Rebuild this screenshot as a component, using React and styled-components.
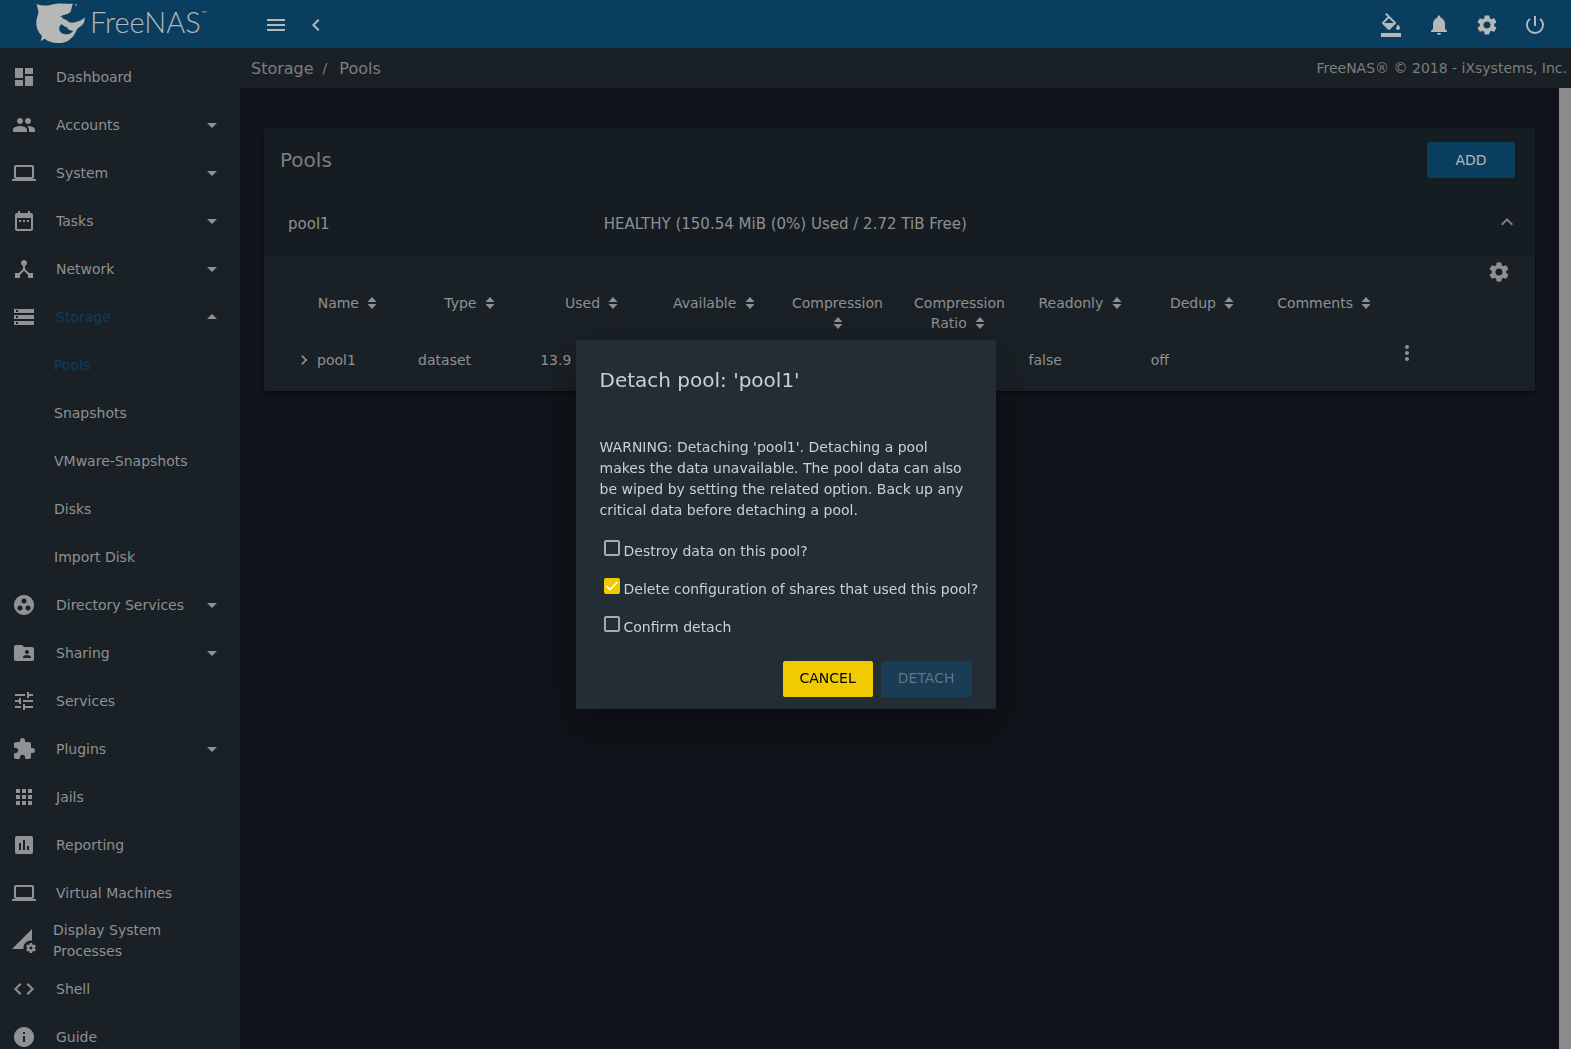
import React from 'react';
import styled, { createGlobalStyle } from 'styled-components';
import {
  MdDashboard, MdPeople, MdLaptop, MdDateRange, MdDeviceHub, MdStorage, MdGroupWork,
  MdFolderShared, MdTune, MdExtension, MdApps, MdAssessment, MdPermDataSetting, MdCode,
  MdInfo, MdArrowDropDown, MdArrowDropUp, MdMenu, MdChevronLeft, MdChevronRight,
  MdFormatColorFill, MdNotifications, MdSettings, MdPowerSettingsNew, MdMoreVert, MdExpandLess,
} from 'react-icons/md';

const color = {
  primary: '#093e60',
  surface: '#1a2126',
  header: '#161d22',
  page: '#10141a',
  dialog: '#232d35',
  accent: '#f0cb00',
  text: '#8f9091',
  textDim: '#7c7e7f',
  onPrimary: '#b6b7b7',
};

const GlobalStyle = createGlobalStyle`
  * { box-sizing: border-box; }
  body {
    margin: 0;
    background: ${color.page};
    color: ${color.text};
    font: 14px/21px "DejaVu Sans", sans-serif;
  }
  button { font: inherit; color: inherit; border: 0; padding: 0; background: none; cursor: pointer; }
  a { color: inherit; text-decoration: none; }
  svg { display: block; flex: none; }
`;

const Shell = styled.div`
  display: grid;
  grid-template: 48px minmax(0, 1fr) / 240px minmax(0, 1fr);
  height: 100vh;
  overflow: hidden;
`;

const Brand = styled.a`
  display: flex;
  align-items: center;
  gap: 5px;
  padding-left: 36px;
  background: ${color.primary};
  color: ${color.onPrimary};
`;

const BrandName = styled.span`
  display: flex;
  padding-bottom: 4px;
  font: 300 29px/40px Lato, sans-serif;
`;

const Trademark = styled.sup`
  font: 7px/24px "DejaVu Sans", sans-serif;
`;

const TopBar = styled.header`
  display: flex;
  align-items: center;
  justify-content: space-between;
  padding: 2px 24px 0;
  background: ${color.primary};
  color: ${color.onPrimary};
`;

const ButtonGroup = styled.div`
  display: flex;
  gap: ${(p) => p.$gap}px;
`;

const IconButton = styled.button`
  display: block;
`;

const Sidebar = styled.nav`
  padding-top: 5px;
  overflow: hidden;
  background: ${color.surface};
`;

const NavList = styled.ul`
  margin: 0;
  padding: 0;
  list-style: none;
`;

const NavLink = styled.a`
  display: flex;
  align-items: center;
  height: 48px;
  padding: 0 16px 0 ${(p) => (p.$sub ? 54 : 12)}px;
  gap: ${(p) => (p.$wrap ? 17 : 20)}px;
  color: ${(p) => (p.$active ? '#0b3d60' : color.text)};
  white-space: ${(p) => (p.$wrap ? 'normal' : 'nowrap')};
  svg { color: #919293; }
`;

const NavLabel = styled.span`
  flex: 1;
  min-width: 0;
`;

const Main = styled.main`
  display: flex;
  flex-direction: column;
  min-width: 0;
`;

const SubBar = styled.div`
  display: flex;
  align-items: center;
  justify-content: space-between;
  flex: none;
  height: 40px;
  padding: 0 4px 0 11px;
  background: ${color.surface};
  color: ${color.textDim};
`;

const Crumbs = styled.nav`
  display: flex;
  gap: 12px;
  font-size: 16px;
`;

const Slash = styled.span`
  margin-left: -3px;
  font-size: 14px;
`;

const Scroller = styled.div`
  display: grid;
  grid-template-columns: minmax(0, 1fr) 12px;
  flex: 1;
`;

const ScrollThumb = styled.div`
  background: #8a8b8a;
`;

const Content = styled.div`
  padding: 40px 24px;
`;

const Card = styled.section`
  border-radius: 2px;
  background: ${color.surface};
  box-shadow: 0 3px 1px -2px rgba(0, 0, 0, 0.2), 0 2px 2px rgba(0, 0, 0, 0.14), 0 1px 5px rgba(0, 0, 0, 0.2);
`;

const CardHeader = styled.div`
  display: flex;
  align-items: center;
  justify-content: space-between;
  height: 64px;
  padding: 0 20px 0 16px;
  border-radius: 2px 2px 0 0;
  background: ${color.header};
`;

const CardTitle = styled.h1`
  margin: 0;
  color: ${color.textDim};
  font-size: 20px;
  font-weight: 400;
`;

const Button = styled.button`
  height: 36px;
  padding: 0 16px;
  border-radius: 2px;
  background: ${color.primary};
  color: ${color.onPrimary};
`;

const AddButton = styled(Button)`
  width: 88px;
`;

const PoolHeader = styled.button`
  display: grid;
  grid-template-columns: 1fr 2fr 1fr;
  align-items: center;
  column-gap: 16px;
  width: 100%;
  height: 64px;
  padding: 0 16px 0 24px;
  background: ${color.header};
  font-size: 15px;
  text-align: left;
  svg { justify-self: end; margin-bottom: 4px; color: #7f8182; }
`;

const PoolTools = styled.div`
  display: flex;
  justify-content: flex-end;
  align-items: flex-start;
  height: 32px;
  padding: 2px 24px 0;
  svg { margin-top: 2px; }
`;

const TableWrap = styled.div`
  padding: 0 26px 7px 24px;
`;

const Table = styled.table`
  width: 100%;
  table-layout: fixed;
  border-collapse: collapse;
`;

const HeadCell = styled.th`
  height: 48px;
  padding: 5px 8px 3px;
  font-weight: 400;
  line-height: 20px;
  text-align: center;
  vertical-align: top;
`;

const SortMark = styled.svg`
  display: inline-block;
  margin: 0 3px 0 4px;
  vertical-align: -1px;
`;

const Cell = styled.td`
  height: 48px;
  padding: 0 8px;
  white-space: nowrap;
`;

const RowName = styled.span`
  display: flex;
  align-items: center;
  gap: 3px;
  margin-left: -2px;
`;

const RowMenu = styled(IconButton)`
  margin-bottom: 14px;
`;

const Backdrop = styled.div`
  position: fixed;
  inset: 0;
  display: grid;
  place-items: center;
`;

const Dialog = styled.form`
  width: 420px;
  padding: 24px 24px 12px;
  border-radius: 2px;
  background: ${color.dialog};
  color: #cdcfd0;
  box-shadow: 0 11px 15px -7px rgba(0, 0, 0, 0.2), 0 24px 38px 3px rgba(0, 0, 0, 0.14), 0 9px 46px 8px rgba(0, 0, 0, 0.12);
`;

const DialogTitle = styled.h2`
  margin: 0 0 41px;
  font-size: 20px;
  font-weight: 400;
  line-height: 32px;
`;

const Warning = styled.p`
  margin: 0 0 11px;
`;

const Option = styled.label`
  display: flex;
  align-items: center;
  gap: 4px;
  height: 38px;
  padding-left: 4px;
  white-space: nowrap;
`;

const CheckSlot = styled.span`
  display: grid;
  margin-bottom: 6px;
  > * { grid-area: 1 / 1; }
  svg { pointer-events: none; }
`;

const CheckInput = styled.input`
  appearance: none;
  width: 16px;
  height: 16px;
  margin: 0;
  border: 2px solid #a7abae;
  border-radius: 2px;
  &:checked { border-color: ${color.accent}; background: ${color.accent}; }
  &:not(:checked) + svg { visibility: hidden; }
`;

const DialogActions = styled.div`
  display: flex;
  justify-content: flex-end;
  gap: 8px;
  padding-top: 15px;
`;

const DialogButton = styled(Button)`
  padding: 0 17px 2px;
  background: ${(p) => (p.$accent ? color.accent : '#1a3c54')};
  color: ${(p) => (p.$accent ? '#000' : '#67737d')};
`;

const navItems = [
  { label: 'Dashboard', icon: MdDashboard },
  { label: 'Accounts', icon: MdPeople, arrow: MdArrowDropDown },
  { label: 'System', icon: MdLaptop, arrow: MdArrowDropDown },
  { label: 'Tasks', icon: MdDateRange, arrow: MdArrowDropDown },
  { label: 'Network', icon: MdDeviceHub, arrow: MdArrowDropDown },
  { label: 'Storage', icon: MdStorage, arrow: MdArrowDropUp, active: true },
  { label: 'Pools', active: true },
  { label: 'Snapshots' },
  { label: 'VMware-Snapshots' },
  { label: 'Disks' },
  { label: 'Import Disk' },
  { label: 'Directory Services', icon: MdGroupWork, arrow: MdArrowDropDown },
  { label: 'Sharing', icon: MdFolderShared, arrow: MdArrowDropDown },
  { label: 'Services', icon: MdTune },
  { label: 'Plugins', icon: MdExtension, arrow: MdArrowDropDown },
  { label: 'Jails', icon: MdApps },
  { label: 'Reporting', icon: MdAssessment },
  { label: 'Virtual Machines', icon: MdLaptop },
  { label: 'Display System Processes', icon: MdPermDataSetting, wrap: true },
  { label: 'Shell', icon: MdCode },
  { label: 'Guide', icon: MdInfo },
];

const columns = ['Name', 'Type', 'Used', 'Available', 'Compression', 'Compression Ratio', 'Readonly', 'Dedup', 'Comments'];

const options = [
  { id: 'destroy', label: 'Destroy data on this pool?' },
  { id: 'cascade', label: 'Delete configuration of shares that used this pool?', checked: true },
  { id: 'confirm', label: 'Confirm detach' },
];

function SharkLogo() {
  return (
    <svg width="49" height="42" viewBox="12 9 147 126" fill="currentColor" aria-hidden="true">
      <path d="M14 12C30 18 45 18 58 14C75 8 100 11 123 11C117 22 120 32 112 39C104 44 92 44 84 50C90 50 94 52 92 56C100 58 106 60 110 66C116 69 126 68 132 66C142 64 152 60 158 52C160 66 152 76 142 82C136 84 134 92 128 102C116 122 98 130 80 129C62 130 48 124 38 116L26 124L30 108C16 96 10 76 14 58C16 46 22 38 18 30Z" />
      <path fill={color.primary} d="M90 73C80 76 80 90 86 97C96 107 116 104 124 92C114 92 106 88 104 81C98 81 94 78 90 73Z" />
      <circle cx="132" cy="15" r="4" opacity="0.500" />
    </svg>
  );
}

function Sort() {
  return (
    <SortMark width="10" height="12" viewBox="0 0 10 12" fill="currentColor" aria-hidden="true">
      <path d="M0.500 5L5 0L9.500 5ZM0.500 7L5 12L9.500 7Z" />
    </SortMark>
  );
}

export default function App() {
  return (
    <>
      <GlobalStyle />
      <Shell>
        <Brand href="#">
          <SharkLogo />
          <BrandName>FreeNAS<Trademark>™</Trademark></BrandName>
        </Brand>
        <TopBar>
          <ButtonGroup $gap={16}>
            <IconButton aria-label="Toggle menu"><MdMenu size={24} /></IconButton>
            <IconButton aria-label="Collapse menu"><MdChevronLeft size={24} /></IconButton>
          </ButtonGroup>
          <ButtonGroup $gap={24}>
            <IconButton aria-label="Theme"><MdFormatColorFill size={24} /></IconButton>
            <IconButton aria-label="Notifications"><MdNotifications size={24} /></IconButton>
            <IconButton aria-label="Settings"><MdSettings size={24} /></IconButton>
            <IconButton aria-label="Power"><MdPowerSettingsNew size={24} /></IconButton>
          </ButtonGroup>
        </TopBar>
        <Sidebar>
          <NavList>
            {navItems.map(({ label, icon: Icon, arrow: Arrow, active, wrap }) => (
              <li key={label}>
                <NavLink href="#" $sub={!Icon} $active={active} $wrap={wrap}>
                  {Icon && <Icon size={24} />}
                  <NavLabel>{label}</NavLabel>
                  {Arrow && <Arrow size={24} />}
                </NavLink>
              </li>
            ))}
          </NavList>
        </Sidebar>
        <Main>
          <SubBar>
            <Crumbs aria-label="Breadcrumb">
              <a href="#">Storage</a>
              <Slash>/</Slash>
              <a href="#">Pools</a>
            </Crumbs>
            <span>FreeNAS® © 2018 - iXsystems, Inc.</span>
          </SubBar>
          <Scroller>
            <Content>
              <Card>
                <CardHeader>
                  <CardTitle>Pools</CardTitle>
                  <AddButton>ADD</AddButton>
                </CardHeader>
                <PoolHeader aria-expanded="true">
                  <span>pool1</span>
                  <span>HEALTHY (150.54 MiB (0%) Used / 2.72 TiB Free)</span>
                  <MdExpandLess size={24} />
                </PoolHeader>
                <PoolTools>
                  <IconButton aria-label="Pool settings"><MdSettings size={24} /></IconButton>
                </PoolTools>
                <TableWrap>
                  <Table>
                    <thead>
                      <tr>
                        {columns.map((name) => (
                          <HeadCell key={name} scope="col">{name} <Sort /></HeadCell>
                        ))}
                        <HeadCell as="td" />
                      </tr>
                    </thead>
                    <tbody>
                      <tr>
                        <Cell>
                          <RowName><MdChevronRight size={20} />pool1</RowName>
                        </Cell>
                        <Cell>dataset</Cell>
                        <Cell>13.9 GiB</Cell>
                        <Cell />
                        <Cell />
                        <Cell />
                        <Cell>false</Cell>
                        <Cell>off</Cell>
                        <Cell />
                        <Cell>
                          <RowMenu aria-label="Dataset actions"><MdMoreVert size={24} /></RowMenu>
                        </Cell>
                      </tr>
                    </tbody>
                  </Table>
                </TableWrap>
              </Card>
            </Content>
            <ScrollThumb />
          </Scroller>
        </Main>
      </Shell>
      <Backdrop>
        <Dialog role="dialog" aria-labelledby="dialog-title">
          <DialogTitle id="dialog-title">Detach pool: 'pool1'</DialogTitle>
          <Warning>
            WARNING: Detaching 'pool1'. Detaching a pool makes the data unavailable. The pool data can also be wiped by
            setting the related option. Back up any critical data before detaching a pool.
          </Warning>
          {options.map(({ id, label, checked }) => (
            <Option key={id} htmlFor={id}>
              <CheckSlot>
                <CheckInput type="checkbox" id={id} defaultChecked={checked} />
                <svg width="16" height="16" viewBox="0 0 16 16" fill="none" stroke="#fff" strokeWidth="1.6" aria-hidden="true">
                  <path d="M2.500 8L6 11.500L13.500 4" />
                </svg>
              </CheckSlot>
              {label}
            </Option>
          ))}
          <DialogActions>
            <DialogButton type="button" $accent>CANCEL</DialogButton>
            <DialogButton type="submit" disabled>DETACH</DialogButton>
          </DialogActions>
        </Dialog>
      </Backdrop>
    </>
  );
}
